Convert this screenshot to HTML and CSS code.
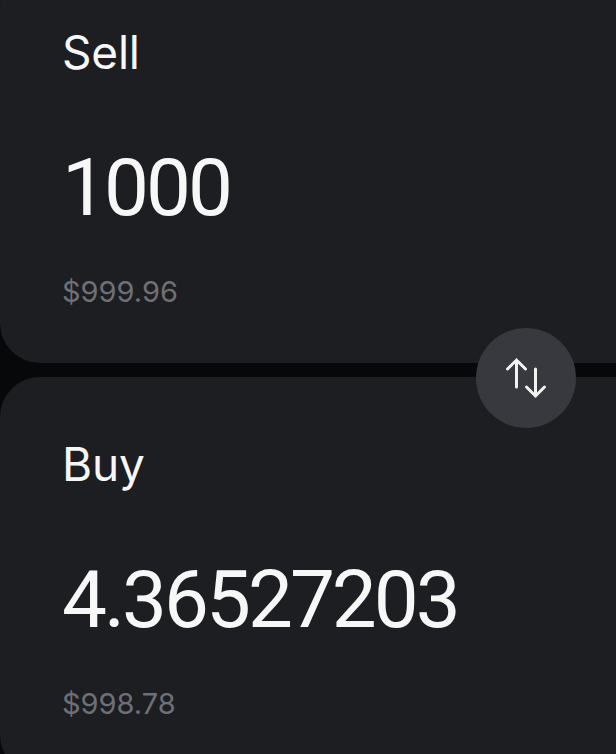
FILE: index.html
```html
<!DOCTYPE html>
<html>
<head>
<meta charset="utf-8">
<link rel="stylesheet" href="styles.css">
</head>
<body>
<div class="swap">
  <section class="card card-sell">
    <div class="label">Sell</div>
    <div class="amount">1000</div>
    <div class="fiat">$999.96</div>
  </section>
  <section class="card card-buy">
    <div class="label">Buy</div>
    <div class="amount">4.36527203</div>
    <div class="fiat">$998.78</div>
  </section>
  <button class="swap-btn" aria-label="Switch">
    <svg width="100" height="100" viewBox="0 0 100 100" fill="none" stroke="#f2f2f3" stroke-width="3" stroke-linecap="round" stroke-linejoin="miter">
      <path d="M40.5 32 V59 M31.5 41 L40.5 32 L49.5 41"/>
      <path d="M59.5 41 V68 M50.5 59 L59.5 68 L68.5 59"/>
    </svg>
  </button>
</div>
</body>
</html>
```
FILE: styles.css
```css
html, body {
  margin: 0;
  padding: 0;
  background: #07080a;
  overflow: hidden;
  height: 100%;
}
body {
  font-family: Inter, "Liberation Sans", sans-serif;
}
.swap {
  position: relative;
  display: flex;
  flex-direction: column;
  gap: 14px;
  margin-top: -35px;
  width: 720px;
}
.card {
  background: #1d1e22;
  border-radius: 40px;
  padding: 59px 0 54px 62px;
  display: flex;
  flex-direction: column;
  color: #f7f7f8;
}
.label {
  font-size: 46px;
  line-height: 56px;
  letter-spacing: -0.2px;
}
.amount {
  font-family: Roboto, Inter, sans-serif;
  font-size: 80px;
  line-height: 96px;
  margin-top: 60px;
  letter-spacing: -3px;
}
.fiat {
  font-size: 29px;
  line-height: 34px;
  margin-top: 39px;
  color: #6f7075;
  letter-spacing: 0;
}
.swap-btn {
  position: absolute;
  left: 476px;
  top: 363px;
  width: 100px;
  height: 100px;
  padding: 0;
  border: 0;
  border-radius: 50%;
  background: #38393e;
  display: flex;
  align-items: center;
  justify-content: center;
}
.swap-btn svg {
  display: block;
}
```
